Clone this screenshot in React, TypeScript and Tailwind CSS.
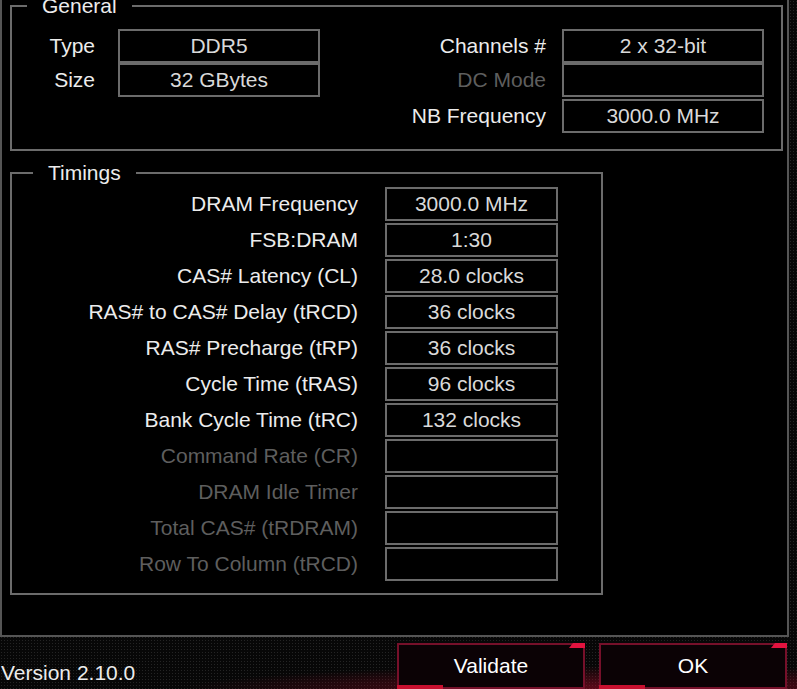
import React from "react";

type Row = { label: string; value?: string; disabled?: boolean };

const generalLeft: Row[] = [
  { label: "Type", value: "DDR5" },
  { label: "Size", value: "32 GBytes" },
];

const timings: Row[] = [
  { label: "DRAM Frequency", value: "3000.0 MHz" },
  { label: "FSB:DRAM", value: "1:30" },
  { label: "CAS# Latency (CL)", value: "28.0 clocks" },
  { label: "RAS# to CAS# Delay (tRCD)", value: "36 clocks" },
  { label: "RAS# Precharge (tRP)", value: "36 clocks" },
  { label: "Cycle Time (tRAS)", value: "96 clocks" },
  { label: "Bank Cycle Time (tRC)", value: "132 clocks" },
  { label: "Command Rate (CR)", disabled: true },
  { label: "DRAM Idle Timer", disabled: true },
  { label: "Total CAS# (tRDRAM)", disabled: true },
  { label: "Row To Column (tRCD)", disabled: true },
];

function Field({ value, width }: { value?: string; width: string }) {
  return (
    <div
      className={`${width} h-[34px] shrink-0 border-2 border-[#6b6b6b] flex items-center justify-center text-[#d9d9d9]`}
    >
      {value}
    </div>
  );
}

function Label({ row, width }: { row: Row; width: string }) {
  return (
    <div
      className={`${width} shrink-0 text-right whitespace-nowrap ${
        row.disabled ? "text-[#5e5e5e]" : "text-[#ececec]"
      }`}
    >
      {row.label}
    </div>
  );
}

function Legend({ text, left }: { text: string; left: string }) {
  // sits on top of the frame's border, like a groupbox caption
  return (
    <span className={`absolute top-[-13px] ${left} px-[15px] bg-black text-[#ececec]`}>
      {text}
    </span>
  );
}

function RogButton({ label }: { label: string }) {
  return (
    <div className="relative w-[188px] h-[46px] shrink-0 border-2 border-[#76102a] bg-[#0b0205] flex items-center justify-center text-white">
      <span className="absolute -top-[2px] -right-[2px] w-[16px] h-[5px] bg-[#e3133f] [clip-path:polygon(4px_0,100%_0,100%_100%,0_100%)]" />
      <span className="absolute -bottom-[2px] -left-[2px] w-[46px] h-[4px] bg-[#c8102f]" />
      {label}
    </div>
  );
}

export default function App() {
  return (
    <div className="w-[797px] h-[689px] overflow-hidden flex flex-col bg-[#070707] bg-[radial-gradient(#242424_1px,transparent_1px)] bg-[length:3px_3px] font-['Liberation_Sans',Arial,sans-serif] text-[21px] leading-[24px]">
      <div className="w-[789px] h-[637px] shrink-0 bg-black border-x-2 border-b-2 border-[#555555] pt-[5px] pl-2 flex flex-col">
        {/* General */}
        <div className="relative w-[773px] h-[146px] shrink-0 border-2 border-[#6b6b6b] pt-[22px] pr-[17px] flex">
          <Legend text="General" left="left-[15px]" />
          <div className="flex flex-col">
            {generalLeft.map((r) => (
              <div key={r.label} className="flex items-center gap-[23px]">
                <Label row={r} width="w-[83px]" />
                <Field value={r.value} width="w-[202px]" />
              </div>
            ))}
          </div>
          <div className="ml-auto flex flex-col">
            <div className="flex items-center gap-4">
              <Label row={{ label: "Channels #" }} width="w-[200px]" />
              <Field value="2 x 32-bit" width="w-[202px]" />
            </div>
            <div className="flex items-center gap-4">
              <Label row={{ label: "DC Mode", disabled: true }} width="w-[200px]" />
              <Field width="w-[202px]" />
            </div>
            <div className="flex items-center gap-4 mt-[2px]">
              <Label row={{ label: "NB Frequency" }} width="w-[200px]" />
              <Field value="3000.0 MHz" width="w-[202px]" />
            </div>
          </div>
        </div>

        {/* Timings */}
        <div className="relative mt-[21px] w-[593px] h-[423px] shrink-0 border-2 border-[#6b6b6b] pt-[13px] flex flex-col gap-[2px]">
          <Legend text="Timings" left="left-[21px]" />
          {timings.map((r) => (
            <div key={r.label} className="flex items-center gap-[27px]">
              <Label row={r} width="w-[346px]" />
              <Field value={r.value} width="w-[173px]" />
            </div>
          ))}
        </div>
      </div>

      {/* bottom bar */}
      <div className="flex-1 flex items-start pt-[6px] pr-[10px] bg-[radial-gradient(ellipse_55%_45%_at_78%_100%,rgba(170,12,42,0.55),transparent)]">
        <span className="flex-1 mt-[18px] ml-px text-[#ececec] whitespace-nowrap">Version 2.10.0</span>
        <div className="flex gap-[14px]">
          <RogButton label="Validate" />
          <RogButton label="OK" />
        </div>
      </div>
    </div>
  );
}
